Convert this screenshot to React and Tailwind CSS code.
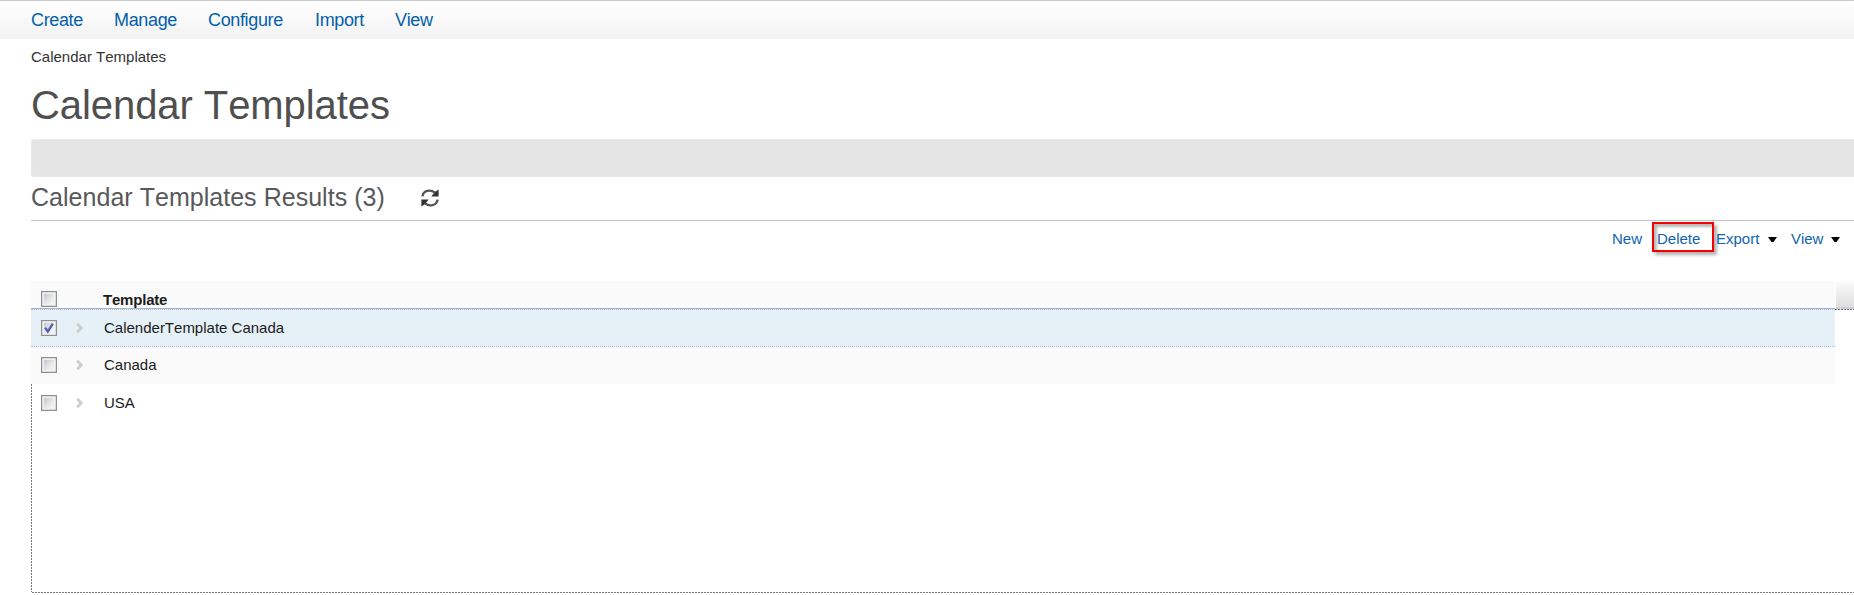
function Check({ checked = false }) {
  return (
    <svg width="16" height="16" viewBox="0 0 16 16" className="block shrink-0">
      <defs>
        <linearGradient id="boxFill" x1="0" y1="0" x2="1" y2="1">
          <stop offset="0" stopColor="#c3c8d0" />
          <stop offset="0.6" stopColor="#e8eaec" />
          <stop offset="1" stopColor="#f6f6f6" />
        </linearGradient>
      </defs>
      <rect x="0.6" y="0.6" width="14.8" height="14.8" fill="#f0f0f0" stroke="#8e8f8f" strokeWidth="1.2" />
      <rect x="3" y="3" width="10" height="10" fill="url(#boxFill)" />
      {checked && <path d="M4.2 7.6 L6.8 11.6 L11.8 3.6" fill="none" stroke="#4a62ad" strokeWidth="2.2" />}
    </svg>
  );
}

function Chevron() {
  return (
    <svg width="8" height="10" viewBox="0 0 8 10" className="block shrink-0">
      <path d="M1.2 0.8 L5.2 5 L1.2 9.2" fill="none" stroke="#cdcdcd" strokeWidth="2.9" />
    </svg>
  );
}

function Refresh() {
  return (
    <svg width="18" height="18" viewBox="0 0 18 18" className="mt-[2px] block shrink-0">
      <path d="M1.4 7.4 C2.4 1.2 9.5 0.2 14 3.6" fill="none" stroke="#555" strokeWidth="2.4" />
      <path d="M17.6 0.6 V7.4 H10.4 L12 5.2 L14.6 2.6 Z" fill="#333" />
      <path d="M16.6 10.6 C15.6 16.8 8.5 17.8 4 14.4" fill="none" stroke="#555" strokeWidth="2.4" />
      <path d="M0.4 17.4 V10.6 H7.6 L6 12.8 L3.4 15.4 Z" fill="#333" />
    </svg>
  );
}

function Caret() {
  return (
    <svg width="9" height="5" viewBox="0 0 9 5" className="mt-px block shrink-0">
      <path d="M0 0 H9 L5.5 5 H3.5 Z" fill="#000" />
    </svg>
  );
}

function DashX({ className = "" }) {
  return <div className={"h-px bg-[repeating-linear-gradient(to_right,#777_0_2px,#fff_2px_3px)] " + className} />;
}

function Row({ name, className, checked }) {
  return (
    <div className={"flex items-center " + className}>
      <Check checked={checked} />
      <div className="ml-[19px] w-[28px]"><Chevron /></div>
      <span className="text-[15px] text-[#1b1b1b]">{name}</span>
    </div>
  );
}

export default function App() {
  return (
    <div className="flex h-[595px] w-[1854px] flex-col overflow-hidden bg-white font-['Liberation_Sans',Arial,sans-serif] whitespace-nowrap [font-kerning:none]">
      <nav className="flex h-[39px] shrink-0 items-center border-t border-[#cacaca] bg-linear-to-b from-white to-[#f2f2f2] pl-[31px] pt-px text-[18px] tracking-[-0.35px] text-[#045fab]">
        <span className="w-[83px]">Create</span>
        <span className="w-[94px]">Manage</span>
        <span className="w-[107px]">Configure</span>
        <span className="w-[80px]">Import</span>
        <span>View</span>
      </nav>
      <div className="ml-[31px] flex flex-1 flex-col">
        <div className="h-[36px] pt-[7px] text-[15px] leading-[22px] text-[#333]">Calendar Templates</div>
        <h1 className="h-[64px] pt-[6px] text-[40px] leading-[48px] tracking-[-0.07px] text-[#4f4f4f]">Calendar Templates</h1>
        <div className="h-[38px] shrink-0 rounded-l-[3px] border border-r-0 border-[#eaeaea] bg-[#e5e5e5]" />
        <div className="flex h-[44px] shrink-0 items-start border-b border-[#c4c4c4] pt-[10px]">
          <h2 className="w-[390px] text-[25px] leading-[21px] tracking-[0.03px] text-[#58595b]">Calendar Templates Results (3)</h2>
          <Refresh />
        </div>
        <div className="flex h-[60px] shrink-0 pl-[1581px] text-[15px] leading-[36px] text-[#1063ae]">
          <span className="w-[40px]">New</span>
          <div className="mt-[1px] h-[30px] w-[62px] shrink-0 border-2 border-[#f40000] pl-[3px] leading-[30px] shadow-[3px_3px_3px_rgba(0,0,0,0.3),inset_3px_3px_3px_rgba(0,0,0,0.28)]">Delete</div>
          <div className="ml-[2px] flex h-[36px] w-[75px] items-center gap-[9px]"><span>Export</span><Caret /></div>
          <div className="flex h-[36px] items-center gap-[8px]"><span className="tracking-[-0.1px]">View</span><Caret /></div>
        </div>
        <div className="flex h-[103px] shrink-0">
          <div className="flex w-[1804px] shrink-0 flex-col">
            <div className="flex h-[28px] shrink-0 border-b border-[#a6b1c5] bg-[#fafafa] pl-[10px]">
              <div className="pt-[10px]"><Check /></div>
              <span className="ml-[46px] pt-[8px] text-[15px] font-bold leading-[22px] tracking-[-0.2px] text-[#1b1b1b]">Template</span>
            </div>
            <Row name="CalenderTemplate Canada" checked className="h-[38px] border-y border-dotted border-[#a9c4ec] bg-[#e5f0f7] pl-[10px]" />
            <Row name="Canada" className="h-[37px] bg-[#fafafa] pb-px pl-[10px]" />
          </div>
          <div className="flex flex-1 flex-col">
            <div className="ml-px h-[28px] border-b-2 border-[#ccd0d8] bg-linear-to-b from-[#fcfcfc] to-[#dedede]" />
            <DashX />
          </div>
        </div>
        <div className="flex h-[208px] shrink-0">
          <div className="w-px bg-[repeating-linear-gradient(to_bottom,#777_0_2px,#fff_2px_3px)]" />
          <Row name="USA" className="h-[38px] pl-[9px]" />
        </div>
        <DashX className="ml-px shrink-0" />
      </div>
    </div>
  );
}
